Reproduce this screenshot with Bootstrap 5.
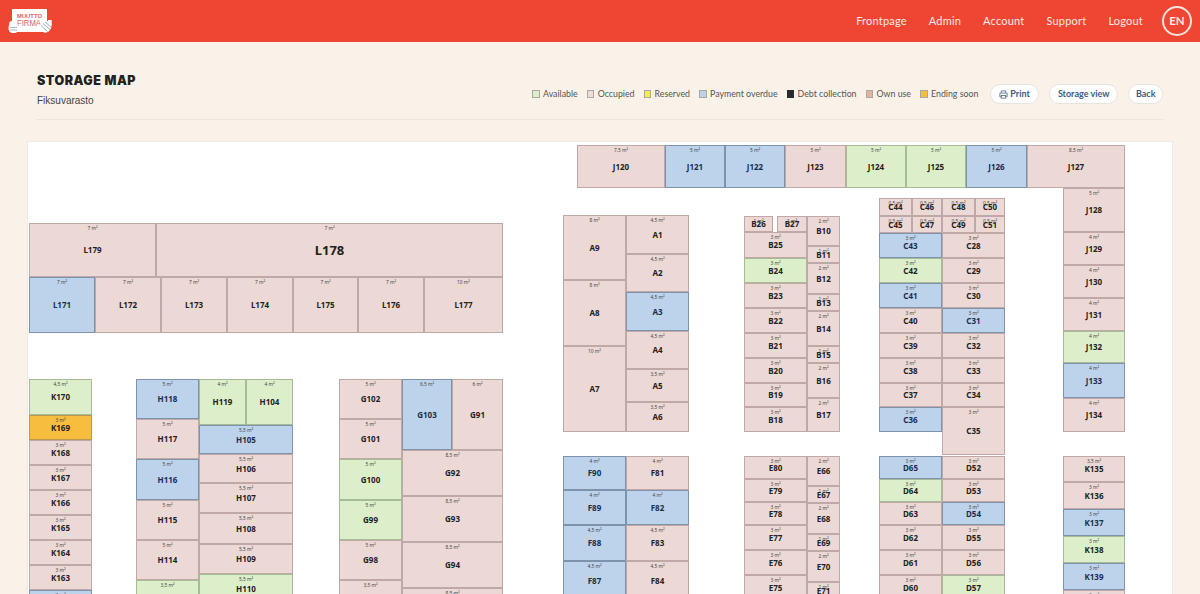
<!DOCTYPE html>
<html lang="en">
<head>
<meta charset="utf-8">
<title>Storage map</title>
<link rel="stylesheet" href="https://cdn.jsdelivr.net/npm/bootstrap@5.3.0/dist/css/bootstrap.min.css">
<style>
html,body{height:100%;overflow:hidden}
body{background:#faf2e8;font-family:Lato,"Noto Sans",sans-serif;color:#333}
.top-bar{background:#ee4632;height:42px;padding:0 8px}
.brand-logo{display:block;width:44px;height:28px}
.top-link{color:#fde9e3;font-size:11px;padding:0;letter-spacing:.2px}
.top-link:hover{color:#fff}
.link-group{gap:22px}
.lang-ring{width:30px;height:30px;border:2px solid #fbe3dc;border-radius:50%;color:#fde9e3;font-size:11.5px;font-weight:700;margin-left:19px}
.head-wrap{padding:0 37px}
.head-inner{border-bottom:1px solid #ebe5dc;height:78px}
.title-block{padding-top:31px}
.page-title{font-family:Inter,"Liberation Sans",sans-serif;font-weight:900;font-size:12.5px;letter-spacing:.5px;color:#222;margin:0 0 5px;line-height:16px;text-transform:uppercase}
.page-sub{font-family:"Liberation Sans",sans-serif;font-size:10px;color:#444;margin:0;line-height:13px}
.tool-block{padding-top:42px}
.legend-row{font-size:8.8px;color:#555;gap:9px;margin-right:2px;line-height:20px}
.legend-chip{display:inline-block;width:7.5px;height:7.5px;border:1px solid #a9a9a0;margin-right:3.500px;vertical-align:-.5px}
.pill-btn{background:#fff;border:1px solid #e6e4e0;color:#3f5a7d;font-size:9px;font-weight:700;height:20px;padding:0 8px;line-height:18px;border-radius:10px;margin-left:10px}
.pill-tight{padding:0 6.5px}
.pill-btn svg{vertical-align:-2px;margin-right:2px}
.map-canvas{position:relative;background:#fff;margin:21px 27px 0;height:600px;border:1px solid #ecebe7}
.unit{position:absolute;box-sizing:border-box;border:1px solid;display:flex;align-items:center;justify-content:center;font-family:"Noto Sans",sans-serif;font-weight:700;font-size:8px;color:#222;line-height:1}
.unit .sz{position:absolute;left:0;right:0;top:1px;text-align:center;font-size:4.8px;font-weight:400;color:#444;line-height:6px}
.st-o{background:#ecd9d5;border-color:#bfa8a6}
.st-b{background:#bdd3ec;border-color:#7c93ab;color:#1c2d4a}
.st-g{background:#dcefca;border-color:#a8bb98}
.st-y{background:#f7bd3e;border-color:#bb984e}
.chip-g{background:#dcefca}.chip-o{background:#ecdfdb}.chip-y{background:#f6ee3e}.chip-b{background:#bdd3ec}.chip-k{background:#2b2b2b;border-color:#2b2b2b}.chip-u{background:#e3b39f}.chip-e{background:#f7bd3e}
</style>
</head>
<body>
<nav class="navbar top-bar d-flex align-items-center justify-content-between flex-nowrap">
  <a href="#" class="d-block" aria-label="Muuttofirma">
    <svg class="brand-logo" viewBox="0 0 44 28">
      <rect x="4" y="2" width="35" height="23" rx="1" fill="#fff"/>
      <text x="9" y="10.8" textLength="25" lengthAdjust="spacingAndGlyphs" font-family="Liberation Sans, sans-serif" font-size="5.4" font-weight="700" fill="#d9606a">MUUTTO</text>
      <text x="9" y="19" textLength="24" lengthAdjust="spacingAndGlyphs" font-family="Liberation Sans, sans-serif" font-size="8.6" fill="#d9606a">FIRMA</text>
      <path d="M1.5 15c1.500-1.500 3-1.500 3.500 0l1.500 1c2.500 0 3.500 1.500 3.500 3.500v3.500c0 2.500-2.500 3-4.500 3-3.500 0-5-2-5-5z" fill="#fff"/>
      <path d="M2 20.500h7M2 23h7" stroke="#8a9aa6" stroke-width=".7"/>
      <path d="M43.500 13c.8 4.500 0 9-2.700 11.500-2.800 2-6 1.300-7.800-1.500l-2-4c1-1.800 2-1 3.200-.8l1.600-4.700 2.400 1.800 2.300-2.300z" fill="#fff"/>
      <path d="M33 18.500l6.500 6M35 16.500l7 6M37 15l6 5" stroke="#7f95a8" stroke-width=".8"/>
    </svg>
  </a>
  <div class="d-flex align-items-center">
    <div class="link-group d-flex align-items-center">
      <a class="nav-link top-link" href="#">Frontpage</a>
      <a class="nav-link top-link" href="#">Admin</a>
      <a class="nav-link top-link" href="#">Account</a>
      <a class="nav-link top-link" href="#">Support</a>
      <a class="nav-link top-link" href="#">Logout</a>
    </div>
    <a class="lang-ring d-flex align-items-center justify-content-center text-decoration-none" href="#">EN</a>
  </div>
</nav>
<header class="head-wrap">
  <div class="head-inner d-flex align-items-start justify-content-between">
    <div class="title-block">
      <h1 class="page-title">Storage map</h1>
      <p class="page-sub">Fiksuvarasto</p>
    </div>
    <div class="tool-block d-flex align-items-center">
      <div class="legend-row d-flex align-items-center">
        <span><i class="legend-chip chip-g"></i>Available</span>
        <span><i class="legend-chip chip-o"></i>Occupied</span>
        <span><i class="legend-chip chip-y"></i>Reserved</span>
        <span><i class="legend-chip chip-b"></i>Payment overdue</span>
        <span><i class="legend-chip chip-k"></i>Debt collection</span>
        <span><i class="legend-chip chip-u"></i>Own use</span>
        <span><i class="legend-chip chip-e"></i>Ending soon</span>
      </div>
      <button class="btn pill-btn" type="button"><svg width="9" height="9" viewBox="0 0 16 16" fill="none" stroke="#3f5a7d" stroke-width="1.3"><path d="M4 5V1.500h8V5M4 12H1.500V5.500h13V12H12"/><rect x="4" y="9.500" width="8" height="5"/></svg>Print</button>
      <button class="btn pill-btn" type="button">Storage view</button>
      <button class="btn pill-btn pill-tight" type="button">Back</button>
    </div>
  </div>
</header>
<main class="map-canvas" id="storageMap"></main>
<script>
const X0=28,Y0=142;
const map=document.getElementById('storageMap');
function add(name,size,x,y,x2,y2,state,big){
  const el=document.createElement('div');
  el.className='unit st-'+(state||'o');
  el.style.left=(x-X0)+'px';el.style.top=(y-Y0)+'px';
  el.style.width=(x2-x)+'px';el.style.height=(y2-y)+'px';
  if(big)el.style.fontSize=big+'px';
  el.innerHTML='<span class="sz">'+size+' m²</span>'+name;
  map.appendChild(el);
}
function col(x,x2,ys,units){units.forEach((u,i)=>add(u[0],u[1],x,ys[i],x2,ys[i+1],u[2]));}
function rowOf(y,y2,xs,units){units.forEach((u,i)=>add(u[0],u[1],xs[i],y,xs[i+1],y2,u[2]));}
rowOf(145,188,[577,665,725,785,846,906,966,1027,1125],[['J120','7,5'],['J121','5','b'],['J122','5','b'],['J123','5'],['J124','5','g'],['J125','5','g'],['J126','5','b'],['J127','8,5']]);
col(1063,1125,[188,232,265,298,331,363,398,432],[['J128','5'],['J129','4'],['J130','4'],['J131','4'],['J132','4','g'],['J133','4','b'],['J134','4']]);
add('L179','7',29,223,156,277);add('L178','7',156,223,503,277,'o',13);
rowOf(277,333,[29,95,161,227,293,358,424,503],[['L171','7','b'],['L172','7'],['L173','7'],['L174','7'],['L175','7'],['L176','7'],['L177','10']]);
col(563,626,[215,280,346,432],[['A9','8'],['A8','8'],['A7','10']]);
col(626,689,[215,254,292,331,369,402,432],[['A1','4,5'],['A2','4,5'],['A3','4,5','b'],['A4','4,5'],['A5','3,5'],['A6','3,5']]);
add('B26','1',744,216,773,232);add('B27','1',777,216,807,232);
col(744,807,[232,258,283,308,333,358,383,407,432],[['B25','3'],['B24','3','g'],['B23','3'],['B22','3'],['B21','3'],['B20','3'],['B19','3'],['B18','3']]);
col(807,840,[216,246,263,294,311,346,363,398,432],[['B10','2'],['B11','1'],['B12','2'],['B13','1'],['B14','2'],['B15','1'],['B16','2'],['B17','2']]);
rowOf(198,216,[879,912,942,975,1005],[['C44','0,5'],['C46','0,5'],['C48','0,5'],['C50','0,5']]);
rowOf(216,233,[879,912,942,975,1005],[['C45','0,5'],['C47','0,5'],['C49','0,5'],['C51','0,5']]);
col(879,942,[233,258,283,308,333,358,383,407,432],[['C43','3','b'],['C42','3','g'],['C41','3','b'],['C40','3'],['C39','3'],['C38','3'],['C37','3'],['C36','3','b']]);
col(942,1005,[233,258,283,308,333,358,383,407,455],[['C28','3'],['C29','3'],['C30','3'],['C31','3','b'],['C32','3'],['C33','3'],['C34','3'],['C35','3']]);
const dy=[456,479,502,525,550,575,600];
col(744,807,dy,[['E80','3'],['E79','3'],['E78','3'],['E77','3'],['E76','3'],['E75','3']]);
col(807,840,[456,486,503,534,551,582,600],[['E66','2'],['E67','1'],['E68','2'],['E69','1'],['E70','2'],['E71','1']]);
col(879,942,dy,[['D65','3','b'],['D64','3','g'],['D63','3'],['D62','3'],['D61','3'],['D60','3']]);
col(942,1005,dy,[['D52','3'],['D53','3'],['D54','3','b'],['D55','3'],['D56','3'],['D57','3','g']]);
const fy=[456,490,525,561,600];
col(563,626,fy,[['F90','4','b'],['F89','4','b'],['F88','4,5','b'],['F87','4,5','b']]);
col(626,689,fy,[['F81','4'],['F82','4','b'],['F83','4,5'],['F84','4,5']]);
const gy=[379,419,459,500,540,580,620];
col(339,402,gy,[['G102','5'],['G101','5'],['G100','5','g'],['G99','5','g'],['G98','5'],['G97','3,5']]);
add('G103','6,5',402,379,452,450,'b');add('G91','6',452,379,503,450);
col(402,503,[450,496,542,588,634],[['G92','8,5'],['G93','8,5'],['G94','8,5'],['G95','8,5']]);
col(136,199,gy,[['H118','5','b'],['H117','5'],['H116','5','b'],['H115','5'],['H114','5'],['H113','3,5','g']]);
add('H119','4',199,379,246,425,'g');add('H104','4',246,379,293,425,'g');
col(199,293,[425,454,483,513,544,574,604],[['H105','5,5','b'],['H106','5,5'],['H107','5,5'],['H108','5,5'],['H109','5,5'],['H110','5,5','g']]);
col(29,92,[379,415,440,465,490,515,540,565,590,615],[['K170','4,5','g'],['K169','3','y'],['K168','3'],['K167','3'],['K166','3'],['K165','3'],['K164','3'],['K163','3'],['K162','3','b']]);
col(1063,1125,[456,482,509,536,563,590,617],[['K135','3,5'],['K136','3'],['K137','3','b'],['K138','3','g'],['K139','3','b'],['K140','3']]);
</script>
<script src="https://cdn.jsdelivr.net/npm/bootstrap@5.3.0/dist/js/bootstrap.bundle.min.js"></script>
</body>
</html>
